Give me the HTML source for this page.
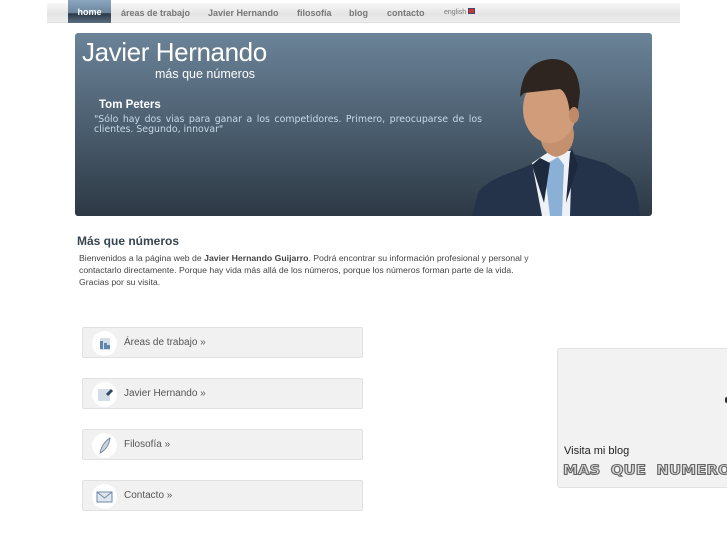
<!DOCTYPE html>
<html><head><meta charset="utf-8"><style>
*{margin:0;padding:0;box-sizing:border-box}
body{width:727px;height:545px;overflow:hidden;background:#fff;font-family:"Liberation Sans",sans-serif;position:relative}
.nav{position:absolute;left:47px;top:3px;width:633px;height:20px;background:linear-gradient(#f7f7f7,#e4e4e4 60%,#ededed);border-bottom:1px solid #e0e0e0}
.nav span{position:absolute;top:5px;font-size:9px;font-weight:bold;color:#777}
.home{position:absolute;left:21px;top:-3px!important;width:43px;height:23px;background:linear-gradient(#8aa5be,#6d879e 55%,#2c3a47 60%,#5a6f82);color:#fff!important;text-align:center;padding-top:7px}
.banner{position:absolute;left:75px;top:33px;width:577px;height:183px;border-radius:3px;background:linear-gradient(#6b8398,#4c5f70 50%,#2d3945);overflow:hidden}
.t1{position:absolute;left:7px;top:4px;font-size:26px;color:#fff;font-weight:normal;letter-spacing:-.4px}
.t2{position:absolute;left:80px;top:34px;font-size:12.5px;color:#fff}
.t3{position:absolute;left:24px;top:66px;font-size:11.5px;font-weight:bold;color:#fff}
.q{position:absolute;left:19px;top:82px;width:388px;font-family:"DejaVu Sans",sans-serif;font-size:9.4px;line-height:10px;color:#c8d8e8;text-align:justify}
h2{position:absolute;left:77px;top:234px;font-size:12px;color:#37454f}
.p{position:absolute;left:79px;top:252px;width:452px;font-size:8.7px;line-height:12px;color:#444}
.box{position:absolute;left:82px;width:281px;height:31px;background:#f1f1f1;border:1px solid #e1e1e1;border-radius:2px;font-size:10px;color:#555}
.box .ic{position:absolute;left:9px;top:3px;width:25px;height:25px;border-radius:50%;background:#fff}
.box span{position:absolute;left:41px;top:9px}
.side{position:absolute;left:557px;top:348px;width:180px;height:140px;background:#f2f2f2;border:1px solid #e2e2e2;border-radius:3px}
</style></head><body>
<div class="nav">
<span class="home">home</span>
<span style="left:74px">áreas de trabajo</span>
<span style="left:161px">Javier Hernando</span>
<span style="left:250px">filosofía</span>
<span style="left:302px">blog</span>
<span style="left:340px">contacto</span>
<span style="left:397px;font-size:7px;font-weight:normal;top:5px">english <b style="display:inline-block;width:7px;height:6px;background:#c33;border:1px solid #447"></b></span>
</div>
<div class="banner">
<div class="t1">Javier Hernando</div>
<div class="t2">más que números</div>
<div class="t3">Tom Peters</div>
<div class="q">"Sólo hay dos vias para ganar a los competidores. Primero, preocuparse de los clientes. Segundo, innovar"</div>
<svg style="position:absolute;left:395px;top:20px" width="180" height="163">
<path d="M2 163 L8 140 Q15 128 45 118 L70 108 L100 100 L135 110 L160 125 Q168 135 170 163Z" fill="#25334a"/>
<path d="M62 110 L80 98 L102 98 L100 163 L72 163Z" fill="#eef2f6"/>
<path d="M78 110 L88 104 L94 112 L92 163 L80 163 L76 130Z" fill="#8ab0d6"/>
<path d="M70 105 L62 112 L74 150 L80 110Z M102 96 L108 112 L96 150 L100 100Z" fill="#1d2a3d"/>
<path d="M70 72 Q68 100 86 104 Q104 100 104 80 L100 60Z" fill="#c4906e"/>
<ellipse cx="80" cy="56" rx="27" ry="34" fill="#d09c7a"/>
<path d="M50 44 Q52 8 82 6 Q108 6 110 40 L106 68 L100 62 Q98 40 90 36 Q72 38 54 40Z" fill="#2e2520"/>
<ellipse cx="104" cy="62" rx="5" ry="8" fill="#c08a68"/>
</svg>
</div>
<h2>Más que números</h2>
<div class="p">Bienvenidos a la página web de <b>Javier Hernando Guijarro</b>. Podrá encontrar su información profesional y personal y contactarlo directamente. Porque hay vida más allá de los números, porque los números forman parte de la vida. Gracias por su visita.</div>
<div class="box" style="top:327px"><div class="ic"><svg width="25" height="25"><rect x="8" y="7" width="10" height="12" fill="#d5dde6"/><rect x="8" y="10" width="3" height="8" fill="#5f87ad"/><rect x="12" y="12" width="3" height="6" fill="#5f87ad"/><rect x="15" y="14" width="3" height="4" fill="#5f87ad"/></svg></div><span>Áreas de trabajo »</span></div>
<div class="box" style="top:378px"><div class="ic"><svg width="25" height="25"><rect x="6" y="7" width="12" height="12" fill="#d5dde6"/><path d="M15 13 L20 8" stroke="#2d4a6a" stroke-width="3"/></svg></div><span>Javier Hernando »</span></div>
<div class="box" style="top:429px"><div class="ic"><svg width="25" height="25"><path d="M8 20 Q10 10 18 5 Q17 14 10 19Z" fill="#c8d2dc" stroke="#6a7f95" stroke-width=".8"/></svg></div><span>Filosofía »</span></div>
<div class="box" style="top:480px"><div class="ic"><svg width="25" height="25"><rect x="5" y="8" width="15" height="10" fill="#dfe6ee" stroke="#6f8aa6"/><path d="M5 8 L12.5 14 L20 8" fill="none" stroke="#6f8aa6"/></svg></div><span>Contacto »</span></div>
<div class="side">
<div style="position:absolute;left:167px;top:48px;width:4px;height:6px;background:#333;border-radius:2px"></div>
<div style="position:absolute;left:6px;top:96px;font-size:11px;color:#222">Visita mi blog</div>
<div style="position:absolute;left:5px;top:112px;font-family:'DejaVu Sans',sans-serif;font-size:15px;font-weight:bold;color:#ddd;letter-spacing:0;-webkit-text-stroke:1.2px #666;white-space:nowrap;transform:scaleY(.9)">MAS&nbsp; QUE&nbsp; NUMEROS</div>
</div>
</body></html>
